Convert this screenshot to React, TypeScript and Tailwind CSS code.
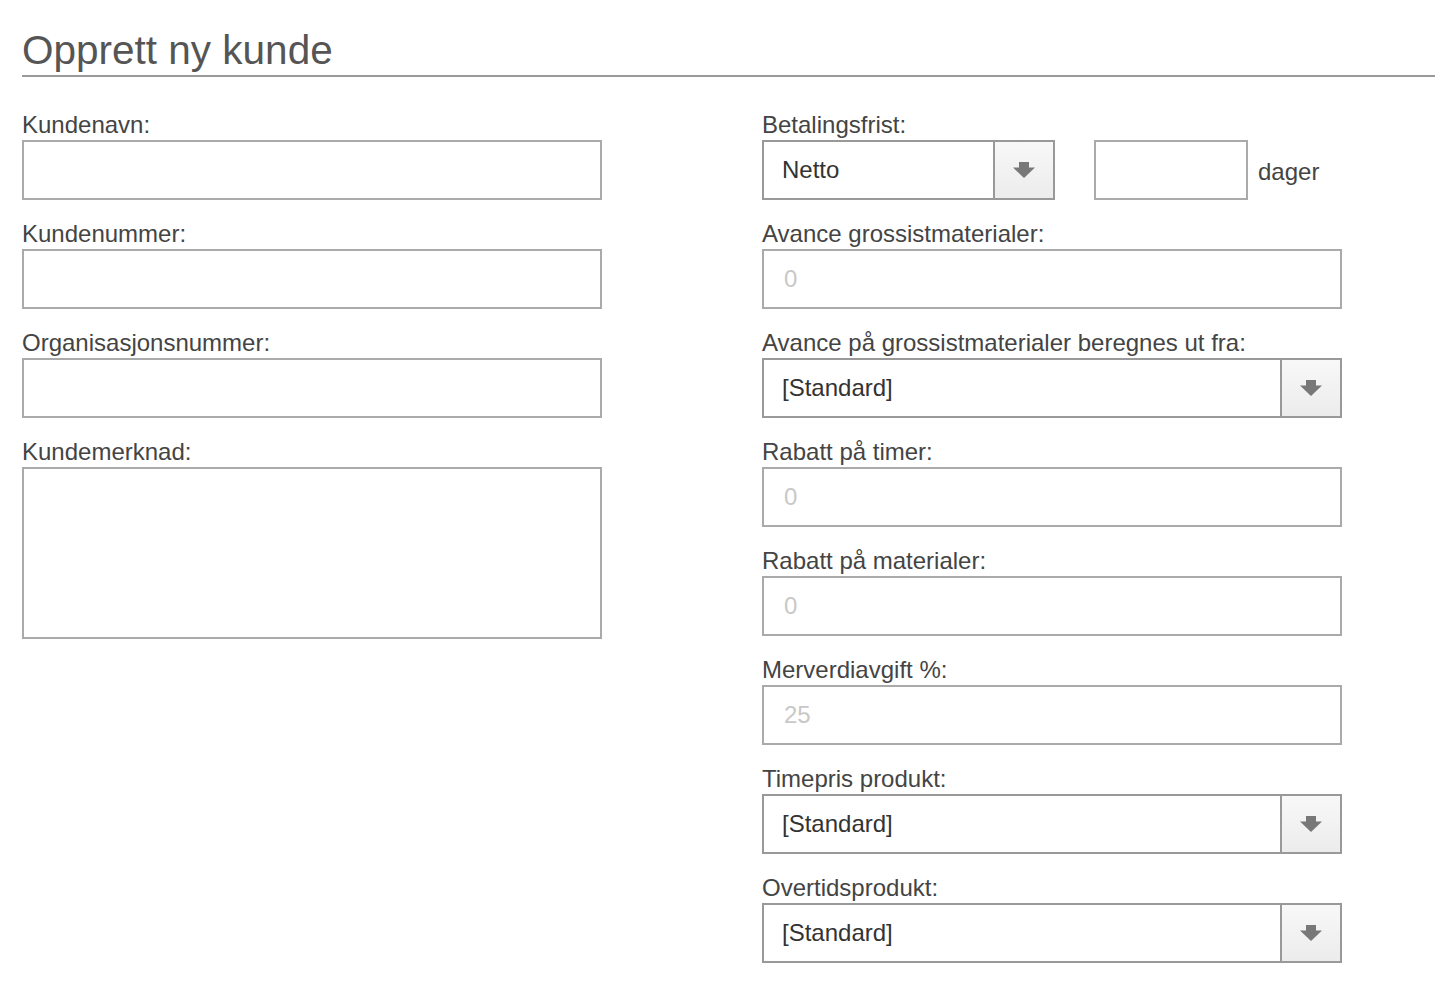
import React from "react";

const font = { fontFamily: '"Liberation Sans", Arial, sans-serif' };

function Arrow() {
  return (
    <svg width="26" height="22" viewBox="0 0 26 22" className="blur-[0.6px]">
      <rect x="8" y="3" width="10" height="6" fill="#787878" />
      <polygon points="2,8.5 24,8.5 13,19" fill="#787878" />
    </svg>
  );
}

function Label({ children }: { children: React.ReactNode }) {
  return <div className="h-[28px] text-[24px] leading-[26px] text-[#444]">{children}</div>;
}

function TextInput({ placeholder, className = "w-[580px]" }: { placeholder?: string; className?: string }) {
  return (
    <input
      type="text"
      placeholder={placeholder}
      className={`${className} h-[60px] border-2 border-[#aaa] bg-white pl-[20px] text-[24px] text-[#333] placeholder:text-[#c8c8c8] outline-none`}
      style={font}
    />
  );
}

function Select({ value, className = "w-[580px]" }: { value: string; className?: string }) {
  return (
    <div className={`${className} flex h-[60px] border-2 border-[#999] bg-white`}>
      <div className="flex flex-1 items-center pl-[18px] text-[24px] text-[#333]">{value}</div>
      <div className="flex w-[60px] items-center justify-center border-l-2 border-[#999] bg-gradient-to-b from-[#f8f8f8] to-[#ececec]">
        <Arrow />
      </div>
    </div>
  );
}

function Field({ label, children }: { label: string; children: React.ReactNode }) {
  return (
    <div className="mb-[21px] flex flex-col">
      <Label>{label}</Label>
      {children}
    </div>
  );
}

export default function App() {
  return (
    <div className="min-h-[999px] bg-white" style={font}>
      <div className="ml-[22px] pt-[30px]">
        <h1 className="border-b-2 border-[#999] pb-[5px] text-[40.5px] font-normal leading-[40px] text-[#555]">
          Opprett ny kunde
        </h1>
      </div>
      <div className="ml-[22px] mt-[35px] grid grid-cols-[580px_580px] gap-x-[160px]">
        <div className="flex flex-col">
          <Field label="Kundenavn:">
            <TextInput />
          </Field>
          <Field label="Kundenummer:">
            <TextInput />
          </Field>
          <Field label="Organisasjonsnummer:">
            <TextInput />
          </Field>
          <Field label="Kundemerknad:">
            <textarea className="h-[172px] w-[580px] resize-none border-2 border-[#aaa] bg-white outline-none" />
          </Field>
        </div>
        <div className="flex flex-col">
          <Field label="Betalingsfrist:">
            <div className="flex items-center">
              <Select value="Netto" className="w-[293px]" />
              <div className="ml-[39px]">
                <TextInput className="w-[154px]" />
              </div>
              <span className="ml-[10px] mt-[3px] text-[24px] text-[#444]">dager</span>
            </div>
          </Field>
          <Field label="Avance grossistmaterialer:">
            <TextInput placeholder="0" />
          </Field>
          <Field label="Avance på grossistmaterialer beregnes ut fra:">
            <Select value="[Standard]" />
          </Field>
          <Field label="Rabatt på timer:">
            <TextInput placeholder="0" />
          </Field>
          <Field label="Rabatt på materialer:">
            <TextInput placeholder="0" />
          </Field>
          <Field label="Merverdiavgift %:">
            <TextInput placeholder="25" />
          </Field>
          <Field label="Timepris produkt:">
            <Select value="[Standard]" />
          </Field>
          <Field label="Overtidsprodukt:">
            <Select value="[Standard]" />
          </Field>
        </div>
      </div>
    </div>
  );
}
